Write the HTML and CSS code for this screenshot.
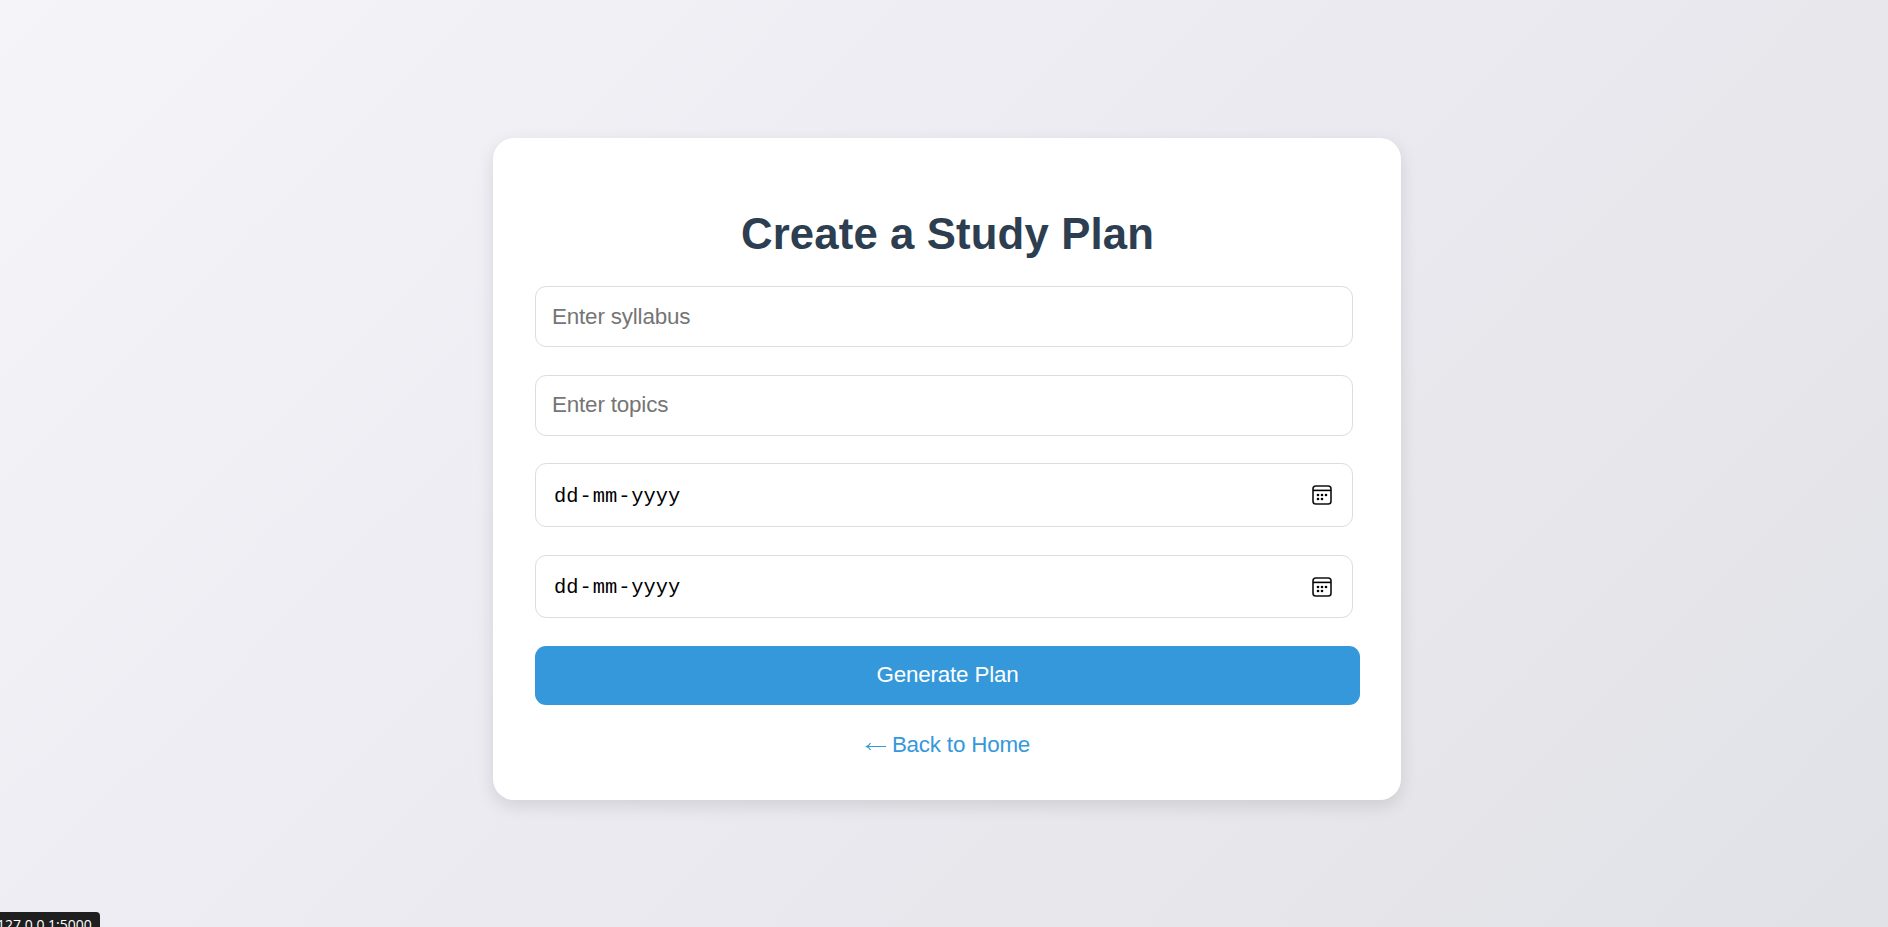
FILE: index.html
```html
<!DOCTYPE html>
<html lang="en">
<head>
<meta charset="UTF-8">
<title>Create a Study Plan</title>
<link rel="stylesheet" href="styles.css">
</head>
<body>
<main class="card">
  <h1 class="title">Create a Study Plan</h1>
  <form class="form">
    <input class="field" type="text" placeholder="Enter syllabus">
    <input class="field topics" type="text" placeholder="Enter topics">
    <div class="field date date-start">
      <span class="date-parts"><span>dd</span><span class="dash">-</span><span>mm</span><span class="dash">-</span><span>yyyy</span></span>
      <svg class="calendar" viewBox="0 0 20 20"><rect x="1" y="1" width="18" height="18" rx="2.8" fill="none" stroke="#111" stroke-width="1.6"/><path d="M1 5.4h18" stroke="#000" stroke-width="1.6"/><g fill="#000"><circle cx="6" cy="10" r="1.3"/><circle cx="10" cy="10" r="1.3"/><circle cx="14" cy="10" r="1.3"/><circle cx="6" cy="14" r="1.3"/><circle cx="10" cy="14" r="1.3"/></g></svg>
    </div>
    <div class="field date date-end">
      <span class="date-parts"><span>dd</span><span class="dash">-</span><span>mm</span><span class="dash">-</span><span>yyyy</span></span>
      <svg class="calendar" viewBox="0 0 20 20"><rect x="1" y="1" width="18" height="18" rx="2.8" fill="none" stroke="#111" stroke-width="1.6"/><path d="M1 5.4h18" stroke="#000" stroke-width="1.6"/><g fill="#000"><circle cx="6" cy="10" r="1.3"/><circle cx="10" cy="10" r="1.3"/><circle cx="14" cy="10" r="1.3"/><circle cx="6" cy="14" r="1.3"/><circle cx="10" cy="14" r="1.3"/></g></svg>
    </div>
    <button class="submit" type="button">Generate Plan</button>
  </form>
  <a class="back" href="#"><svg class="arrow" viewBox="0 0 22 12"><path d="M1.5 6.5H21M5.5 3Q4.2 5.5 1.5 6.5Q4.2 7.5 5.5 10" fill="none" stroke="#3498db" stroke-width="1.2"/></svg><span>Back to Home</span></a>
</main>
<div class="status">127.0.0.1:5000</div>
</body>
</html>
```
FILE: styles.css
```css
* { box-sizing: border-box; }
body {
  margin: 0;
  height: 927px;
  padding: 138px 487px 127px 493px;
  overflow: hidden;
  font-family: "Liberation Sans", Arial, sans-serif;
  font-size: 22.4px;
  background: linear-gradient(135deg, #f4f4f9, #ebeaf0 50%, #e5e5ea 80%, #e0e2e7);
}
.card {
  display: flex;
  flex-direction: column;
  height: 662px;
  padding: 70px 41px 0 42px;
  background: #fff;
  border-radius: 21px;
  box-shadow: 0 6px 17px rgba(0, 0, 0, 0.11);
}
.title {
  margin: 0;
  height: 78px;
  line-height: 51px;
  font-size: 43.7px;
  letter-spacing: 0.14px;
  text-align: center;
  color: #2c3e50;
}
.form { display: flex; flex-direction: column; }
.field {
  width: 818px;
  height: 61px;
  margin: 0 0 28px;
  padding: 0 16px;
  border: 1px solid #ddd;
  border-radius: 11px;
  background: #fff;
  font: inherit;
  letter-spacing: -0.17px;
}
.topics { margin-bottom: 27px; padding-bottom: 2px; }
.field::placeholder { color: #757575; }
.date {
  display: flex;
  align-items: center;
  justify-content: space-between;
  padding: 0 20px 0 18px;
  letter-spacing: 0;
}
.date-start { height: 64px; }
.date-end { height: 63px; }
.date-parts {
  display: flex;
  padding-top: 4px;
  font-family: "Liberation Mono", monospace;
  font-size: 20.4px;
  line-height: 26px;
  color: #000;
}
.date-end .date-parts { padding-top: 3px; }
.dash { width: 14.2px; text-align: center; }
.calendar { width: 20px; height: 20px; }
.submit {
  width: 825px;
  height: 59px;
  padding: 0 0 2px;
  border: 0;
  border-radius: 11px;
  background: #3498db;
  color: #fff;
  font: inherit;
  letter-spacing: -0.17px;
}
.back {
  display: flex;
  align-items: center;
  align-self: center;
  gap: 5px;
  margin-top: 27px;
  line-height: 26px;
  letter-spacing: -0.2px;
  color: #3498db;
  text-decoration: none;
}
.arrow { width: 22px; height: 12px; margin-top: 2px; }
.status {
  position: absolute;
  left: 0;
  top: 912px;
  width: 100px;
  height: 15px;
  overflow: hidden;
  border-radius: 0 4px 0 0;
  background: #1f1f1f;
  color: #fff;
  font: 14px/26px "Open Sans", sans-serif;
  text-indent: -3px;
}
```
